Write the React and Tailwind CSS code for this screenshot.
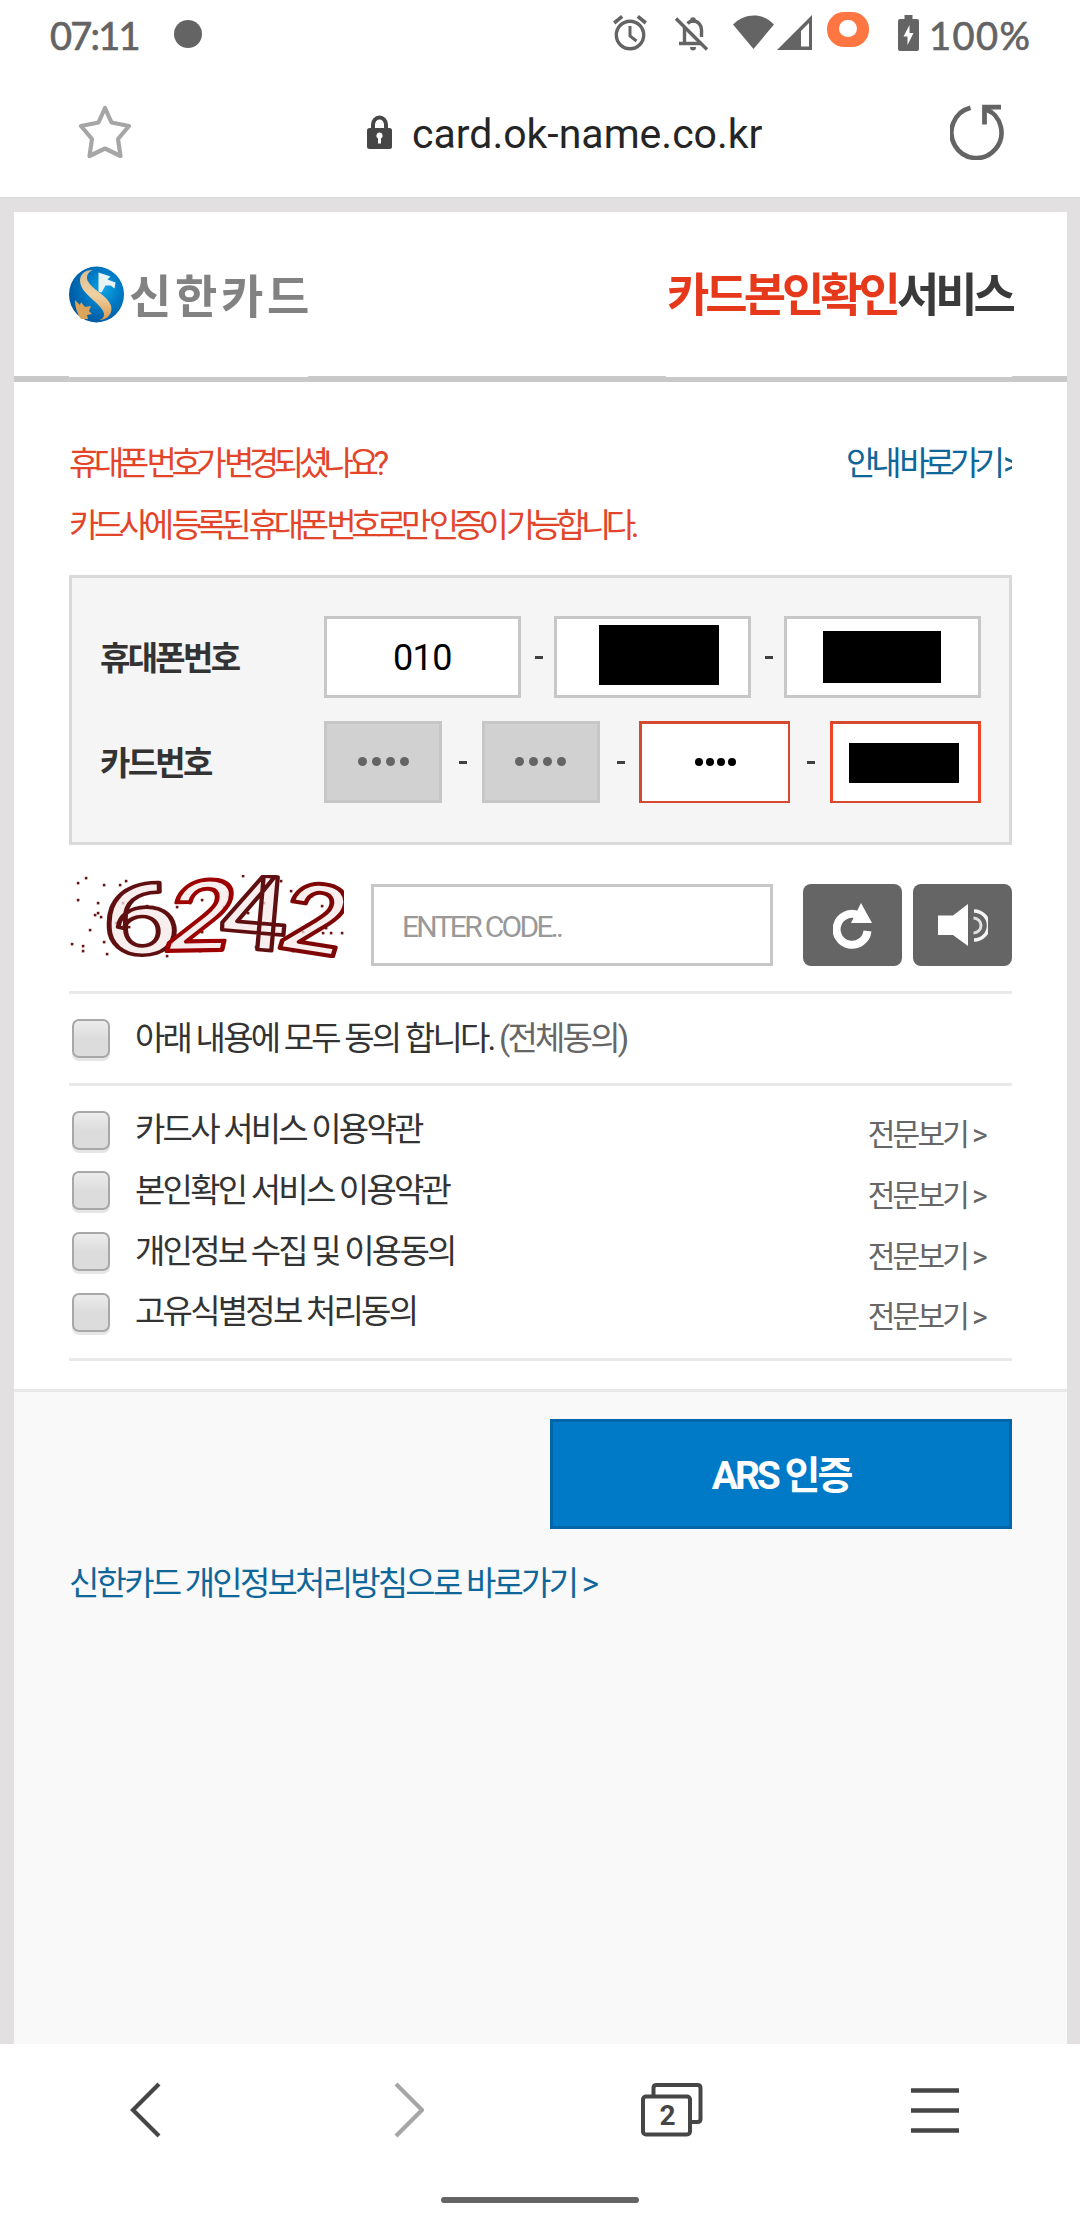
import React from "react";

const KR = "font-[Roboto,'Noto_Sans_CJK_KR',sans-serif]";

function StatusBar() {
  return (
    <div className="flex h-[66px] items-start text-[#646464]">
      <span className="ml-[50px] mt-[11px] w-[124px] whitespace-nowrap font-[Lato,sans-serif] text-[38px] leading-[48px] tracking-[-1.800px] [-webkit-text-stroke:0.7px_#646464]">
        07:11
      </span>
      <span className="mt-[20px] h-[28px] w-[28px] rounded-full bg-[#646464]" />
      <svg className="ml-[411px] mt-[15px] h-[36px] w-[34px]" viewBox="0 0 34 36" fill="none" stroke="#646464">
        <circle cx="17" cy="20" r="13.7" strokeWidth="3.4" />
        <path d="M17 11v10l6.500 5" strokeWidth="3" />
        <path d="M1.200 8l8-6.600M32.800 8l-8-6.600" strokeWidth="3.600" />
      </svg>
      <svg className="ml-[28px] mt-[16px] h-[36px] w-[34px]" viewBox="0 0 34 36" fill="none" stroke="#646464">
        <path d="M4 27.500h23M9.500 27V11.500M12.500 7.500C14 6 16 5 18 5c5 0 8.500 4 8.500 9v7" strokeWidth="3.400" />
        <path d="M1 2.500l31 31" strokeWidth="3.400" />
        <circle cx="18" cy="4" r="2.800" fill="#646464" stroke="none" />
        <path d="M15 31h6a3 3.500 0 0 1-6 0z" fill="#646464" stroke="none" />
      </svg>
      <svg className="ml-[24px] mt-[15px] h-[35px] w-[42px]" viewBox="0 0 42 35">
        <path d="M0 9.500C12-2.500 30-2.500 41 9.500L20.500 34z" fill="#646464" />
      </svg>
      <svg className="ml-[2px] mt-[15px] h-[35px] w-[35px]" viewBox="0 0 35 35">
        <path d="M35 0v35H0z" fill="#646464" />
        <path d="M32 8v23.500h-8V16z" fill="#fff" />
      </svg>
      <span className="ml-[15px] mt-[12px] flex h-[35px] w-[42px] items-start justify-center rounded-[17px] bg-[#ff7643] pt-[8px]">
        <span className="h-[17px] w-[18px] rounded-full bg-white" />
      </span>
      <svg className="ml-[29px] mt-[15px] h-[36px] w-[21px]" viewBox="0 0 21 36">
        <path d="M6.500 0h8v4H19q2 0 2 2v28q0 2-2 2H2q-2 0-2-2V6q0-2 2-2h4.500z" fill="#646464" />
        <path d="M11.500 10L5.500 21.500H9.500V30L15.500 18h-4z" fill="#fff" />
      </svg>
      <span className="ml-[10px] mt-[11px] whitespace-nowrap font-[Lato,sans-serif] text-[38px] leading-[48px] tracking-[1.500px] [-webkit-text-stroke:0.7px_#646464]">
        100%
      </span>
    </div>
  );
}

function AddressBar() {
  return (
    <div className="flex h-[132px] items-start border-b border-[#d8d8d8] pt-[38px]">
      <svg className="ml-[77px] mt-[-2px] h-[56px] w-[56px]" viewBox="0 0 56 56" fill="none" stroke="#a6a6a6" strokeWidth="4.200" strokeLinejoin="round">
        <path d="M28 6L34.500 20.500L52 24L41 37L43.500 54L28 46.500L12.500 54L15 37L4 24L21.500 20.500Z" />
      </svg>
      <svg className="ml-[234px] mt-[11px] h-[34px] w-[25px]" viewBox="0 0 25 34">
        <path d="M6 15V9.500a6.500 7 0 0 1 13 0V15" fill="none" stroke="#464646" strokeWidth="4" />
        <rect y="13" width="25" height="21" rx="2.500" fill="#464646" />
        <path d="M12.500 17.500a3.200 3.200 0 0 1 1.500 6V28.500h-3V23.500a3.200 3.200 0 0 1 1.500-6z" fill="#fff" />
      </svg>
      <span className="ml-[20px] mt-[6px] w-[350px] whitespace-nowrap font-[Roboto,sans-serif] text-[41px] leading-[48px] text-[#252525]">
        card.ok-name.co.kr
      </span>
      <svg className="ml-[188px] h-[56px] w-[54px]" viewBox="0 0 54 56" fill="none" stroke="#646464" strokeWidth="4.600">
        <path d="M20.500 3.800A25 25.500 0 1 0 36 5" />
        <path d="M51 3.200H34.500V20.500" strokeWidth="4.800" />
        <path d="M34 4.500L42 9" strokeWidth="4" />
      </svg>
    </div>
  );
}

function Globe() {
  return (
    <svg className="h-[57px] w-[56px] shrink-0" viewBox="0 0 56 57">
      <defs>
        <radialGradient id="globe" cx="0.62" cy="0.4" r="0.65">
          <stop offset="0" stopColor="#10a5e4" />
          <stop offset="0.5" stopColor="#0079c4" />
          <stop offset="1" stopColor="#0057a0" />
        </radialGradient>
        <linearGradient id="ribbon" x1="0" y1="0" x2="0" y2="1">
          <stop offset="0" stopColor="#d9bd93" />
          <stop offset="0.5" stopColor="#f0d1a2" />
          <stop offset="1" stopColor="#d79a50" />
        </linearGradient>
      </defs>
      <ellipse cx="27.500" cy="28.500" rx="27.500" ry="28" fill="url(#globe)" />
      <path d="M24 4C14 4 9.500 10 11.500 18C14.500 29 31 37 34.500 46C36 50 34 53 30 54C39 54 44 47 42 39.500C38 29 22 23 18.500 14.500C17 10 19 6 24 4Z" fill="url(#ribbon)" />
      <path d="M29.500 6.500l12 4-3 3 8 3-1 6-4-3-5 0-4 7-3-1z" fill="#e8f3f4" />
      <path d="M6 34l5 5 1-3 4 5 6-1-2 5 3 3-5 1 1 4-7 0C9 49 6 42 6 34z" fill="#dba45b" />
    </svg>
  );
}

function Header() {
  return (
    <header className="flex h-[170px] items-start justify-between border-b-[6px] border-[#c9c9c9] px-[55px]">
      <div className="flex h-[165px] w-[239px] items-start bg-white pt-[54px]">
        <Globe />
        <span className={`${KR} ml-[4px] mt-[1px] whitespace-nowrap text-[46px] font-bold leading-[60px] tracking-[3.700px] text-[#828282] blur-[0.6px]`}>
          신한카드
        </span>
      </div>
      <div className="h-[165px] w-[346px] bg-white pt-[53px]">
        <h1 className={`${KR} ml-[1px] whitespace-nowrap text-[46px] font-bold leading-[60px] tracking-[-4px] text-[#3a3a3a] blur-[0.6px]`}>
          <span className="text-[#e6391c]">카드본인확인</span>서비스
        </h1>
      </div>
    </header>
  );
}

function Dash() {
  return (
    <span className="flex flex-1 justify-center pl-[2px]">
      <span className="h-[3px] w-[8px] bg-[#404040]" />
    </span>
  );
}

function Dots({ className, gap }) {
  return (
    <span className={`flex pb-[2px] ${gap}`}>
      {[0, 1, 2, 3].map((i) => (
        <span key={i} className={`rounded-full ${className}`} />
      ))}
    </span>
  );
}

function FormBox() {
  const label = `${KR} w-[224px] whitespace-nowrap pt-[3px] text-[33px] font-bold leading-[48px] tracking-[-2.700px] text-[#333]`;
  const phone = "flex h-[82px] w-[197px] border-[3px] border-[#c7c7c7] bg-white";
  const disabled = "flex h-[82px] w-[118px] items-center justify-center border-[3px] border-[#c6c6c6] bg-[#d1d1d1]";
  return (
    <div className="mt-[18px] flex h-[270px] flex-col gap-[23px] border-[3px] border-[#d9d9d9] bg-[#f5f5f5] pl-[28px] pr-[28px] pt-[38px]">
      <div className="flex items-center">
        <span className={label}>휴대폰번호</span>
        <span className={`${phone} items-center justify-center pt-[1px] font-[Roboto,sans-serif] text-[36px] leading-[48px] tracking-[-0.500px] text-black`}>010</span>
        <Dash />
        <span className={phone}>
          <span className="ml-[42px] mt-[6px] h-[60px] w-[120px] bg-black" />
        </span>
        <Dash />
        <span className={phone}>
          <span className="ml-[36px] mt-[12px] h-[52px] w-[118px] bg-black" />
        </span>
      </div>
      <div className="flex items-center">
        <span className={label}>카드번호</span>
        <span className={disabled}>
          <Dots className="h-[9px] w-[9px] bg-[#646464]" gap="gap-[5px]" />
        </span>
        <Dash />
        <span className={disabled}>
          <Dots className="h-[9px] w-[9px] bg-[#646464]" gap="gap-[5px]" />
        </span>
        <Dash />
        <span className="flex h-[82px] w-[151px] items-center justify-center border-[3px] border-[#d5492e] border-b-[2px] border-r-[2px] bg-white">
          <Dots className="h-[8px] w-[8px] bg-black" gap="gap-[3px]" />
        </span>
        <Dash />
        <span className="flex h-[82px] w-[151px] border-[3px] border-x-[#f04526] border-y-[#d5492e] border-b-[2px] bg-white">
          <span className="ml-[16px] mt-[19px] h-[40px] w-[110px] bg-black" />
        </span>
      </div>
    </div>
  );
}

const SPECKS = [
  [3, 69], [9, 8], [9, 25], [14, 71], [14, 76], [17, 3], [21, 55], [26, 40], [29, 28], [29, 38], [32, 42], [35, 10], [35, 67],
  [38, 79], [47, 48], [51, 10], [57, 6], [54, 28], [78, 31], [86, 34], [108, 32], [110, 25], [121, 28], [133, 25], [133, 57],
  [147, 25], [160, 22], [155, 32], [174, 1], [179, 38], [187, 72], [195, 28], [212, 6], [222, 16], [243, 21], [253, 31],
  [234, 57], [254, 58], [257, 53], [262, 58], [273, 58], [224, 76], [131, 76], [98, 81], [48, 26], [60, 52], [265, 11],
];

function Captcha() {
  return (
    <svg className="h-[83px] w-[275px]" viewBox="0 0 275 83" fontFamily="Roboto, sans-serif" fontSize="100" fontWeight="500" strokeLinejoin="round">
      {SPECKS.map(([x, y], i) => (
        <rect key={i} x={x - 1.2} y={y - 1.2} width="2.600" height="2.600" fill="#6b1414" />
      ))}
      <g fill="#f6e8e8" fillOpacity="0.75">
        <text transform="translate(33 80) rotate(-1) scale(1.380 1)" stroke="#5f0f10" strokeWidth="3.600">6</text>
        <text transform="translate(92 76) rotate(-1) skewX(-14) scale(1.150 0.980)" stroke="#9c0000" strokeWidth="4.200">2</text>
        <text transform="translate(148 71) rotate(5) scale(1.200 1.040)" stroke="#5f0f10" strokeWidth="3.600">4</text>
        <text transform="translate(205 72) rotate(9) skewX(-8) scale(1.120 0.970)" stroke="#7d0505" strokeWidth="4.200">2</text>
      </g>
    </svg>
  );
}

function CaptchaRow() {
  const button = "flex h-[82px] w-[99px] items-center justify-center rounded-[8px] bg-[#656565]";
  return (
    <div className="flex h-[149px] items-start border-b-[3px] border-[#e9e9e9] pt-[30px]">
      <Captcha />
      <span className="ml-[27px] mt-[9px] flex h-[82px] w-[402px] items-center border-[3px] border-[#c7c7c7] bg-white pl-[28px] pt-[3px] font-[Roboto,sans-serif] text-[30px] leading-[40px] tracking-[-2.700px] text-[#999]">
        ENTER CODE..
      </span>
      <span className={`${button} ml-[30px] mt-[9px]`}>
        <svg className="mt-[2px] h-[46px] w-[39px]" viewBox="0 0 39 46">
          <path d="M34.500 28A15.500 15.500 0 1 1 25 12" fill="none" stroke="#fff" strokeWidth="8" />
          <path d="M28 0L39 20H18z" fill="#fff" />
        </svg>
      </span>
      <span className={`${button} ml-[11px] mt-[9px]`}>
        <svg className="h-[42px] w-[50px]" viewBox="0 0 50 42">
          <path d="M0 11.500H15L30 0V42L15 31H0z" fill="#fff" />
          <path d="M36 7a14.500 14.500 0 0 1 0 29" fill="none" stroke="#f5f5f5" strokeWidth="3.400" />
          <path d="M35.500 14a7.500 7.500 0 0 1 0 15" fill="none" stroke="#e0e0e0" strokeWidth="3" />
        </svg>
      </span>
    </div>
  );
}

function Checkbox() {
  return (
    <span className="h-[39px] w-[38px] shrink-0 rounded-[7px] border-[2.500px] border-[#a8a8a8] bg-linear-to-b from-[#ececec] via-[#dcdcdc] to-[#dcdcdc] shadow-[0_3px_0_0_#e6e6e6]" />
  );
}

const TERMS = ["카드사 서비스 이용약관", "본인확인 서비스 이용약관", "개인정보 수집 및 이용동의", "고유식별정보 처리동의"];

function Agreements() {
  const text = `${KR} ml-[25px] whitespace-nowrap text-[33px] leading-[48px] tracking-[-2.780px] text-[#333]`;
  return (
    <>
      <div className="flex h-[92px] items-center border-b-[3px] border-[#e9e9e9] pl-[3px]">
        <Checkbox />
        <span className={text}>
          아래 내용에 모두 동의 합니다. <span className="text-[#666]">(전체동의)</span>
        </span>
      </div>
      <ul className="mb-[28px] h-[275px] border-b-[3px] border-[#e9e9e9] pl-[3px] pt-[14px]">
        {TERMS.map((t) => (
          <li key={t} className="flex h-[60.670px] items-center pr-[27px]">
            <Checkbox />
            <span className={text}>{t}</span>
            <span className={`${KR} ml-auto whitespace-nowrap pt-[10px] text-[30px] leading-[40px] tracking-[-2.700px] text-[#666]`}>
              전문보기 &gt;
            </span>
          </li>
        ))}
      </ul>
    </>
  );
}

function BottomNav() {
  return (
    <nav className="flex h-[176px] flex-col items-center bg-white">
      <div className="grid h-[132px] w-[1052px] grid-cols-4 items-center justify-items-center">
        <svg className="mr-[2px] h-[56px] w-[32px]" viewBox="0 0 32 56" fill="none" stroke="#464646" strokeWidth="4.200">
          <path d="M30 2L4 28L30 54" />
        </svg>
        <svg className="h-[56px] w-[30px]" viewBox="0 0 30 56" fill="none" stroke="#a6a6a6" strokeWidth="4.200">
          <path d="M2 2L28 28L2 54" />
        </svg>
        <svg className="h-[54px] w-[62px]" viewBox="0 0 62 54" fill="none" stroke="#464646" strokeWidth="4">
          <path d="M12.500 13V5q0-3 3-3H56.500q3 0 3 3V36q0 3-3 3H49" />
          <rect x="2" y="13.500" width="47" height="38" rx="3" />
          <text x="26.500" y="42" textAnchor="middle" fontFamily="Roboto, sans-serif" fontWeight="700" fontSize="28" fill="#464646" stroke="none">
            2
          </text>
        </svg>
        <svg className="h-[46px] w-[48px]" viewBox="0 0 48 46" stroke="#464646" strokeWidth="4.400">
          <path d="M0 3.500H48M0 23.500H48M0 43.500H48" />
        </svg>
      </div>
      <span className="mt-[21px] h-[6px] w-[198px] rounded-full bg-[#646464]" />
    </nav>
  );
}

export default function App() {
  const notice = `${KR} whitespace-nowrap text-[33px] leading-[62px] tracking-[-5.450px]`;
  return (
    <div className="flex h-[2220px] w-[1080px] flex-col overflow-hidden bg-white">
      <StatusBar />
      <AddressBar />
      <main className="flex h-[1846px] flex-col bg-[#e2e0e1] pl-[14px] pr-[13px] pt-[14px]">
        <div className="flex flex-1 flex-col bg-white">
          <Header />
          <section className="px-[55px] pt-[51px]">
            <div className={`${notice} flex justify-between text-[#e2452a]`}>
              <span>휴대폰 번호가 변경되셨나요?</span>
              <a className="w-[166px] overflow-hidden tracking-[-5.200px] text-[#0f6699]">안내 바로가기 &gt;</a>
            </div>
            <p className={`${notice} text-[#e2452a]`}>카드사에 등록된 휴대폰 번호로만 인증이 가능합니다.</p>
            <FormBox />
            <CaptchaRow />
            <Agreements />
          </section>
          <section className="flex flex-1 flex-col border-t-[3px] border-[#e9e9e9] bg-[#f9f9f9] px-[55px] pt-[27px]">
            <button className={`${KR} ml-auto h-[110px] w-[462px] border-[3px] border-[#0066a9] bg-[#007ac7] pt-[3px] text-[39px] font-bold leading-[56px] tracking-[-3px] text-white`}>
              ARS 인증
            </button>
            <a className={`${KR} mt-[27px] whitespace-nowrap text-[33px] leading-[56px] tracking-[-2.780px] text-[#0f6699]`}>
              신한카드 개인정보처리방침으로 바로가기 &gt;
            </a>
          </section>
        </div>
      </main>
      <BottomNav />
    </div>
  );
}
